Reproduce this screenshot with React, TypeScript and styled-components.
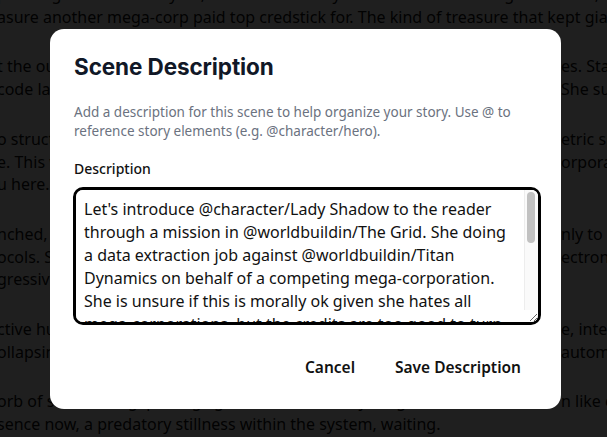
import React from 'react'
import styled, { createGlobalStyle } from 'styled-components'

const GlobalStyle = createGlobalStyle`
  html, body {
    margin: 0;
    padding: 0;
    background: #ffffff;
    overflow: hidden;
  }
  * {
    box-sizing: border-box;
  }
`

// story page that sits behind the dialog
const Page = styled.div`
  margin: -17px 0 0 -3px;
  font-family: 'Noto Sans', 'Open Sans', sans-serif;
  font-size: 16px;
  line-height: 22.7px;
  color: #111111;
`

const Paragraph = styled.div`
  margin-bottom: 27px;
`

const Line = styled.div<{ $split?: boolean }>`
  display: grid;
  grid-template-columns: ${(p) => (p.$split ? '564px 1fr' : '1fr')};
  white-space: nowrap;
  overflow: hidden;

  span {
    overflow: hidden;
  }
`

const Overlay = styled.div`
  position: fixed;
  inset: 0;
  background: rgba(0, 0, 0, 0.878);
  display: flex;
  align-items: center;
  justify-content: center;
  padding-left: 4px;
`

const Dialog = styled.div`
  width: 511px;
  height: 380px;
  background: #ffffff;
  border-radius: 14px;
  padding: 24px 24px 23px;
  display: flex;
  flex-direction: column;
`

const Title = styled.h2`
  margin: 0;
  font-family: Inter, 'Liberation Sans', sans-serif;
  font-size: 22.5px;
  line-height: 28px;
  font-weight: 700;
  letter-spacing: -0.1px;
  color: #111827;
`

const Subtitle = styled.p`
  margin: 22px 0 0;
  font-family: 'Noto Sans', 'Open Sans', sans-serif;
  font-size: 13.5px;
  line-height: 19px;
  color: #6b7280;
`

const Label = styled.label`
  display: block;
  margin-top: 18px;
  font-family: 'Noto Sans', 'Open Sans', sans-serif;
  font-size: 14px;
  line-height: 20px;
  font-weight: 500;
  color: #111111;
`

const Field = styled.div`
  position: relative;
  margin-top: 8px;
  margin-left: -1px;
  width: 468px;
`

const TextArea = styled.textarea`
  display: block;
  width: 100%;
  height: 138px;
  padding: 8.5px 26px 8.5px 8px;
  border: 3px solid #000000;
  border-radius: 10px;
  font-family: 'Noto Sans', 'Open Sans', sans-serif;
  font-size: 16px;
  line-height: 23px;
  color: #111111;
  background: #ffffff;
  outline: none;
  resize: vertical;
`

// the page is photographed with scrollbars hidden, so the textarea's bar is drawn on top
const ScrollTrack = styled.div`
  position: absolute;
  top: 3px;
  right: 3px;
  bottom: 15px;
  width: 14px;
  background: #fafafa;
  border-left: 1px solid #ededed;
  border-top-right-radius: 6px;
  pointer-events: none;
`

const ScrollThumb = styled.div`
  position: absolute;
  top: 2px;
  right: 3px;
  width: 8px;
  height: 51px;
  border-radius: 4px;
  background: #c1c1c1;
`

const Footer = styled.div`
  margin-top: auto;
  display: flex;
  justify-content: flex-end;
  gap: 8px;
`

const Button = styled.button`
  height: 38px;
  padding: 0 16px;
  border: none;
  border-radius: 8px;
  background: transparent;
  font-family: 'Noto Sans', 'Open Sans', sans-serif;
  font-size: 15.5px;
  font-weight: 600;
  color: #111111;
  cursor: pointer;
`

const story: { left: string; right?: string }[][] = [
  [
    { left: 'pressing on its outer layers, hidden beneath years of buried and forgotten code, a' },
    { left: 'asure another mega-corp paid top credstick for. The kind of treasure that kept giants awake' },
  ],
  [
    { left: 't the outer rim of the network, old lattices', right: 'es. Stacks of' },
    { left: '  code laced through the dark like veins', right: 'She surfed' },
  ],
  [
    { left: 'o structures that grew in strange, asym', right: 'etric spirals' },
    { left: 'e. This was the work of the old corp', right: 'orporate' },
    { left: 'u here.' },
  ],
  [
    { left: 'nched, she slipped past the first gate,', right: 'nly to find' },
    { left: 'ocols. She rewrote the handshake and', right: 'ectronic' },
    { left: 'gressive countermeasures flickered past' },
  ],
  [
    { left: 'ctive hunters drifted through the dark', right: 'e, intent' },
    { left: 'ollapsing walls of old data and', right: 'automated' },
  ],
  [
    { left: 'orb of shimmering, pulsing light swallowed everything in its', right: 'n like clouds' },
    { left: 'sence now, a predatory stillness within the system, waiting.' },
  ],
]

const description =
  "Let's introduce @character/Lady Shadow to the reader through a mission in @worldbuildin/The Grid. She doing a data extraction job against @worldbuildin/Titan Dynamics on behalf of a competing mega-corporation. She is unsure if this is morally ok given she hates all mega-corporations, but the credits are too good to turn down and her rent is long overdue. Halfway through the job she stumbles onto something she was never meant to see: a hidden partition of files suggesting Titan Dynamics is running illegal experiments on the people of the lower sectors. Now she has to decide whether to finish the job, walk away, or leak it all."

export default function App() {
  return (
    <>
      <GlobalStyle />
      <Page>
        {story.map((para, i) => (
          <Paragraph key={i}>
            {para.map((line, j) => (
              <Line key={j} $split={line.right !== undefined}>
                <span>{line.left}</span>
                {line.right !== undefined && <span>{line.right}</span>}
              </Line>
            ))}
          </Paragraph>
        ))}
      </Page>
      <Overlay>
        <Dialog>
          <Title>Scene Description</Title>
          <Subtitle>
            Add a description for this scene to help organize your story. Use @ to reference story
            elements (e.g. @character/hero).
          </Subtitle>
          <Label htmlFor="scene-description">Description</Label>
          <Field>
            <TextArea id="scene-description" defaultValue={description} />
            <ScrollTrack>
              <ScrollThumb />
            </ScrollTrack>
          </Field>
          <Footer>
            <Button>Cancel</Button>
            <Button>Save Description</Button>
          </Footer>
        </Dialog>
      </Overlay>
    </>
  )
}
